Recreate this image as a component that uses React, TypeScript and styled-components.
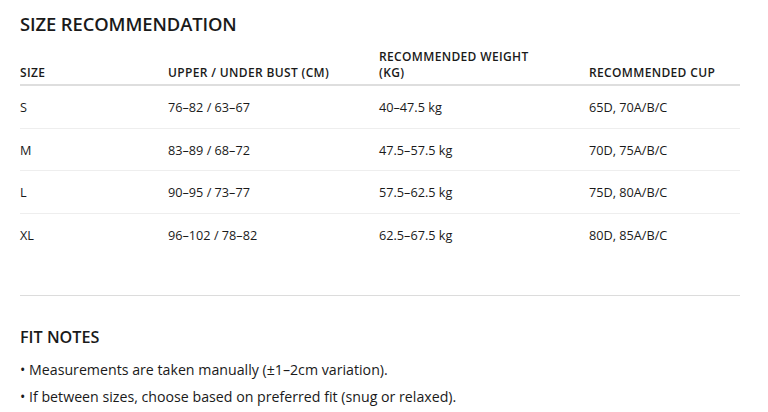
import React from "react";
import styled, { createGlobalStyle } from "styled-components";

const Global = createGlobalStyle`
  html, body { margin: 0; padding: 0; background: #fff; }
  body { font-family: "Open Sans", "Noto Sans", sans-serif; color: #1a1a1a; }
`;

const Page = styled.div`
  width: 720px;
  padding: 11px 28px 0 20px;
`;

const Title = styled.h2`
  margin: 0;
  font-size: 18.4px;
  line-height: 26px;
  font-weight: 600;
  letter-spacing: -0.1px;
`;

const Table = styled.table`
  width: 720px;
  border-collapse: collapse;
  table-layout: fixed;
  margin-top: 12px;
  margin-bottom: 40px;
`;

const Th = styled.th<{ $w?: number }>`
  width: ${(p) => (p.$w ? `${p.$w}px` : "auto")};
  text-align: left;
  vertical-align: bottom;
  font-size: 12px;
  letter-spacing: 0.35px;
  line-height: 16px;
  font-weight: 600;
  padding: 0 0 3px 0;
  border-bottom: 2px solid #dedede;
`;

const Td = styled.td<{ $last?: boolean }>`
  font-size: 12.7px;
  line-height: 16.5px;
  padding: 13px 0 12px;
  border-bottom: ${(p) => (p.$last ? "none" : "1px solid #eeeeee")};
`;

const Divider = styled.hr`
  margin: 0;
  border: none;
  border-top: 1px solid #dcdcdc;
`;

const NotesTitle = styled.h3`
  margin: 30px 0 0;
  font-size: 16.2px;
  line-height: 22px;
  font-weight: 600;
`;

const Notes = styled.ul`
  list-style: none;
  margin: 12px 0 0;
  padding: 0;
  display: flex;
  flex-direction: column;
  gap: 7px;
`;

const Note = styled.li`
  font-size: 14.2px;
  line-height: 20px;
`;

const rows = [
  ["S", "76–82 / 63–67", "40–47.5 kg", "65D, 70A/B/C"],
  ["M", "83–89 / 68–72", "47.5–57.5 kg", "70D, 75A/B/C"],
  ["L", "90–95 / 73–77", "57.5–62.5 kg", "75D, 80A/B/C"],
  ["XL", "96–102 / 78–82", "62.5–67.5 kg", "80D, 85A/B/C"],
];

export default function App() {
  return (
    <>
      <Global />
      <Page>
        <Title>SIZE RECOMMENDATION</Title>
        <Table>
          <thead>
            <tr>
              <Th $w={148}>SIZE</Th>
              <Th $w={211}>UPPER / UNDER BUST (CM)</Th>
              <Th $w={210}>
                RECOMMENDED WEIGHT
                <br />
                (KG)
              </Th>
              <Th>RECOMMENDED CUP</Th>
            </tr>
          </thead>
          <tbody>
            {rows.map((r, i) => (
              <tr key={r[0]}>
                {r.map((c, j) => (
                  <Td key={j} $last={i === rows.length - 1}>
                    {c}
                  </Td>
                ))}
              </tr>
            ))}
          </tbody>
        </Table>
        <Divider />
        <NotesTitle>FIT NOTES</NotesTitle>
        <Notes>
          <Note>• Measurements are taken manually (±1–2cm variation).</Note>
          <Note>• If between sizes, choose based on preferred fit (snug or relaxed).</Note>
        </Notes>
      </Page>
    </>
  );
}
